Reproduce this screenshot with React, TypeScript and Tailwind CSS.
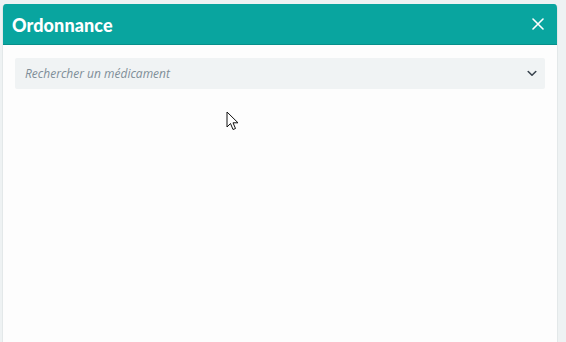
import React from "react";

export default function App() {
  return (
    <div className="w-[566px] h-[342px] bg-[#eef2f3] overflow-hidden relative" style={{ fontFamily: '"Open Sans", sans-serif' }}>
      <div className="ml-[2px] mt-[4px] w-[556px] h-[338px] flex flex-col bg-[#fdfdfd] border-l border-r border-[#e3e8e9] rounded-t-[4px] overflow-hidden">
        <div className="h-[41px] bg-[#09a59f] border-b border-[#078f8a] flex items-center justify-between pl-[9px] pr-[13px] shrink-0">
          <span className="text-white text-[18px] tracking-[0.1px] leading-none pt-[1px]" style={{ fontFamily: '"Lato", sans-serif', fontWeight: 900 }}>Ordonnance</span>
          <svg width="12" height="12" viewBox="0 0 12 12" fill="none" stroke="white" strokeWidth="1.6" strokeLinecap="round">
            <path d="M1 1 L11 11 M11 1 L1 11" />
          </svg>
        </div>
        <div className="pt-[13px] px-[12px]">
          <div className="h-[31px] bg-[#f0f3f4] rounded-[2px] flex items-center justify-between pl-[10px] pr-[8px]">
            <span className="italic text-[12px] text-[#7f8e98]">Rechercher un médicament</span>
            <svg width="10" height="7" viewBox="0 0 10 7" fill="none" stroke="#3c4650" strokeWidth="1.6" strokeLinecap="round" strokeLinejoin="round">
              <path d="M1.2 1.5 L5 5.2 L8.8 1.5" />
            </svg>
          </div>
        </div>
      </div>
      <svg className="absolute left-[226px] top-[111px]" width="14" height="21" viewBox="0 0 14 21">
        <path d="M1 1 L1 16 L4.5 12.5 L7 18.5 L9.5 17.5 L7 11.8 L12 11.8 Z" fill="white" stroke="#111" strokeWidth="1" strokeLinejoin="round" />
      </svg>
    </div>
  );
}
